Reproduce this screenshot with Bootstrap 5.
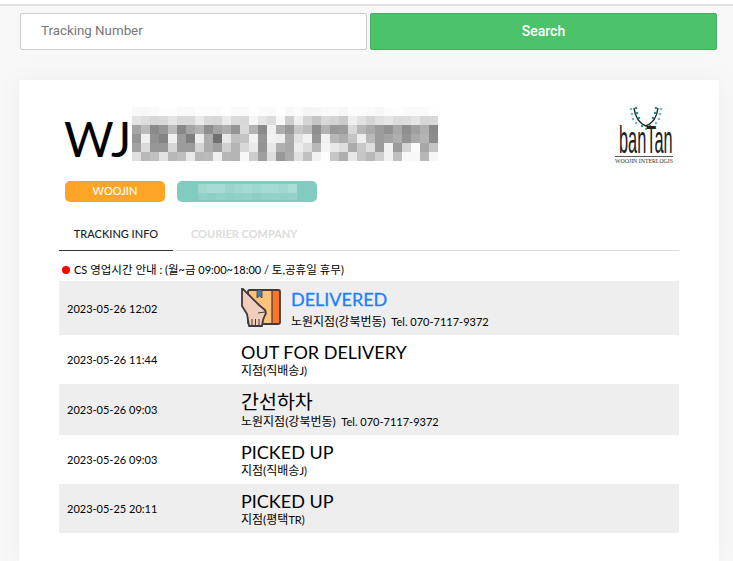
<!DOCTYPE html>
<html lang="ko">
  <head>
    <meta charset="UTF-8" />
    <meta name="viewport" content="width=device-width, initial-scale=1.0" />
    <title>Tracking</title>
    <link
      href="https://cdn.jsdelivr.net/npm/bootstrap@5.3.3/dist/css/bootstrap.min.css"
      rel="stylesheet"
    />
    <style>
      body {
        background: #f8f8f8;
        color: #000;
        font-family: Lato, 'Noto Sans CJK KR', sans-serif;
      }
      .top-line {
        height: 6px;
        background: #fff;
        border-bottom: 2px solid #e2e2e2;
      }
      .search-form {
        gap: 3px;
        margin: 7px 16px 0 20px;
      }
      .search-input,
      .search-btn {
        width: 347px;
        height: 37px;
        border-radius: 2px;
        font-family: Roboto, sans-serif;
      }
      .search-input {
        border: 1px solid #ccc;
        padding: 0 20px 2px;
        font-size: 13.33px;
      }
      .search-input::placeholder {
        color: #777;
        opacity: 1;
      }
      .search-btn {
        background: #4cc26b;
        border: 1px solid #46ac62;
        color: #fff;
        font-size: 14px;
        font-weight: 500;
        padding: 0;
      }
      .sheet {
        margin: 30px 14px 0 19px;
        padding: 0 40px 28px;
        height: 481px;
        box-shadow: 0 0 24px rgba(0, 0, 0, 0.05);
      }
      .waybill-head {
        height: 101px;
        padding: 27px 0 0 5px;
      }
      .waybill-no {
        font-size: 48px;
        line-height: 48px;
        margin-top: 8px;
      }
      .blur-block {
        display: grid;
        grid-template-columns: repeat(34, 9px);
        grid-auto-rows: 9px;
        margin-left: 1px;
        height: 54px;
      }
      .shop-logo {
        margin: -2px 5px 0 auto;
        overflow: visible;
      }
      .tag-row {
        gap: 12px;
        padding-left: 6px;
      }
      .tag-pill {
        height: 21px;
        border-radius: 5px;
        color: #fff;
        font-size: 11px;
        font-weight: 500;
      }
      .tag-orange {
        width: 100px;
        background: #ffa526;
      }
      .tag-teal {
        width: 140px;
        background: #82cbc1;
        padding-top: 3px;
      }
      .tag-blur {
        display: grid;
        grid-template-columns: repeat(11, 9px);
        grid-template-rows: 9px 7px;
      }
      .tab-bar {
        margin-top: 14px;
        height: 35px;
        border-bottom: 1px solid #ddd;
      }
      .tab-bar .nav-link {
        width: 114px;
        height: 35px;
        padding: 10px 0 0;
        margin-right: 18px;
        font-size: 11px;
        font-weight: 500;
        color: #dcdcdc;
        border-bottom: 1px solid transparent;
      }
      .tab-bar .nav-link.active {
        color: #222;
        text-align: center;
        border-bottom-color: #333;
      }
      .tab-bar .nav-link.tab-off {
        width: auto;
        font-weight: 700;
      }
      .cs-note {
        height: 30px;
        padding: 8px 0 0 3px;
        gap: 4px;
        font-size: 11px;
      }
      .cs-note .ko-text {
        font-size: 11.5px;
      }
      .red-dot {
        width: 8px;
        height: 8px;
        border-radius: 50%;
        background: #f00;
      }
      .ko-text {
        font-size: 12px;
      }
      .track-row {
        padding-left: 8px;
      }
      .track-row:nth-child(odd) {
        background: #eee;
      }
      .track-date {
        width: 174px;
        flex: none;
        font-size: 11px;
        padding-top: 2px;
      }
      .track-text {
        padding-top: 1px;
      }
      .track-title {
        font-size: 18px;
        line-height: 20px;
        margin-bottom: 1px;
      }
      .track-place {
        font-size: 11px;
        line-height: 16px;
      }
      .delivered-block {
        padding-top: 3px;
      }
      .delivered-block .track-title {
        margin-bottom: 5px;
      }
      .hangul-block {
        padding-top: 2px;
      }
      .hangul-block .track-title {
        margin-bottom: 2px;
        font-size: 19.5px;
      }
      .delivered-text {
        color: #1e80ff;
        -webkit-text-stroke: 0.3px #1e80ff;
      }
      .box-icon {
        margin-right: 10px;
      }
      .h-54 { height: 54px; }
      .h-49 { height: 49px; }
      .h-51 { height: 51px; }
    </style>
  </head>
  <body>
    <div class="top-line"></div>
    <form class="search-form d-flex">
      <input class="search-input form-control" type="text" placeholder="Tracking Number" />
      <button class="search-btn btn" type="button">Search</button>
    </form>

    <div class="sheet card border-0 rounded-0">
      <div class="waybill-head d-flex">
        <div class="waybill-no">WJ</div>
        <div class="blur-block" id="blur-block"></div>
        <svg class="shop-logo" width="60" height="60" viewBox="0 0 60 60">
          <path d="M20 3c1 9 5 15 12 18 7-3 11-9 12-18" fill="none" stroke="#222" stroke-width="1.4" />
          <g fill="#2f8f96">
            <circle cx="22" cy="3" r="1.3" /><circle cx="23" cy="8" r="1.3" /><circle cx="25" cy="13" r="1.3" />
            <circle cx="42" cy="3" r="1.3" /><circle cx="41" cy="8" r="1.3" /><circle cx="39" cy="13" r="1.3" />
            <circle cx="28" cy="21" r="1.3" /><circle cx="36" cy="21" r="1.3" />
          </g>
          <g fill="#69bcc0">
            <circle cx="17" cy="4" r="1.3" /><circle cx="18" cy="9" r="1.3" /><circle cx="19" cy="14" r="1.3" />
            <circle cx="22" cy="18" r="1.3" /><circle cx="47" cy="4" r="1.3" /><circle cx="46" cy="9" r="1.3" />
            <circle cx="45" cy="14" r="1.3" /><circle cx="42" cy="18" r="1.3" /><circle cx="32" cy="24" r="1.3" />
          </g>
          <text transform="translate(5 48) scale(0.43 1)" font-family="Liberation Sans" font-size="38" fill="#222">banTan</text>
          <rect x="1" y="51" width="58" height="0.8" fill="#333" />
          <text x="1" y="58" textLength="58" lengthAdjust="spacingAndGlyphs" font-family="Liberation Serif" font-size="6" fill="#333">WOOJIN INTERLOGIS</text>
        </svg>
      </div>

      <div class="tag-row d-flex">
        <div class="tag-pill tag-orange d-flex align-items-center justify-content-center">WOOJIN</div>
        <div class="tag-pill tag-teal d-flex justify-content-center"><div class="tag-blur" id="tag-blur"></div></div>
      </div>

      <ul class="tab-bar nav">
        <li class="nav-item"><a class="nav-link active" href="#">TRACKING INFO</a></li>
        <li class="nav-item"><a class="nav-link tab-off" href="#">COURIER COMPANY</a></li>
      </ul>

      <div class="cs-note d-flex align-items-center">
        <span class="red-dot"></span>
        <span>CS <span class="ko-text">영업시간 안내</span> : (<span class="ko-text">월</span>~<span class="ko-text">금</span> 09:00~18:00 / <span class="ko-text">토,공휴일 휴무</span>)</span>
      </div>

      <div>
        <div class="track-row h-54 d-flex align-items-center">
          <div class="track-date">2023-05-26 12:02</div>
          <svg class="box-icon" width="40" height="40" viewBox="0 0 40 40">
            <rect x="7" y="2" width="32" height="34" rx="1.500" fill="#ffc27a" stroke="#3f3a3d" stroke-width="1.800" />
            <rect x="31" y="3" width="7" height="32" fill="#ff7426" />
            <path d="M31 2v34" stroke="#3f3a3d" stroke-width="1.200" />
            <path d="M16 2h5v8l-2.500-2-2.500 2z" fill="#3f7fb5" stroke="#3f3a3d" stroke-width="0.800" />
            <path d="M1 0l17 17 6 5c1 2 1 4 0 5l-2 5-1 6H8L6 26 1 18z" fill="#f0cdbd" stroke="#3f3a3d" stroke-width="1.800" stroke-linejoin="round" />
            <path d="M11 31v7M14.500 31v7M18 31v7M24 24l-7 1" stroke="#3f3a3d" stroke-width="1" fill="none" />
          </svg>
          <div class="delivered-block">
            <div class="track-title delivered-text">DELIVERED</div>
            <div class="track-place"><span class="ko-text">노원지점(강북번동)</span>&nbsp; Tel. 070-7117-9372</div>
          </div>
        </div>
        <div class="track-row h-49 d-flex align-items-center">
          <div class="track-date">2023-05-26 11:44</div>
          <div class="track-text">
            <div class="track-title">OUT FOR DELIVERY</div>
            <div class="track-place"><span class="ko-text">지점(직배송</span>J)</div>
          </div>
        </div>
        <div class="track-row h-51 d-flex align-items-center">
          <div class="track-date">2023-05-26 09:03</div>
          <div class="hangul-block">
            <div class="track-title">간선하차</div>
            <div class="track-place"><span class="ko-text">노원지점(강북번동)</span>&nbsp; Tel. 070-7117-9372</div>
          </div>
        </div>
        <div class="track-row h-49 d-flex align-items-center">
          <div class="track-date">2023-05-26 09:03</div>
          <div class="track-text">
            <div class="track-title">PICKED UP</div>
            <div class="track-place"><span class="ko-text">지점(직배송</span>J)</div>
          </div>
        </div>
        <div class="track-row h-49 d-flex align-items-center">
          <div class="track-date">2023-05-25 20:11</div>
          <div class="track-text">
            <div class="track-title">PICKED UP</div>
            <div class="track-place"><span class="ko-text">지점(평택</span>TR)</div>
          </div>
        </div>
      </div>
    </div>

    <script src="https://cdn.jsdelivr.net/npm/bootstrap@5.3.3/dist/js/bootstrap.bundle.min.js"></script>
    <script>
      'use strict';

      // mosaic over the waybill number, grey level per cell
      const blurRows = [
        'f9 f8 fa fd fd fa f9 fc fb fb fe fa f9 fe fb fa fe f8 fb f5 f6 f9 fa f6 fc fb fa f7 fc fd fa f9 fa fe',
        'e3 dd d6 d8 e4 d8 d9 ea d9 d7 eb da d8 f6 e6 dc f8 cd ee d4 c5 d8 d4 ca ef e1 d5 e0 e6 dc dd e4 d6 d8',
        'a5 bb 8a 97 bb 88 a5 b3 8e a3 ad 95 d9 b3 8a f0 ad 98 c8 bd 8e b2 98 9c d8 b8 aa 9c 92 a8 8e a0 b0 8a',
        '95 f0 92 84 f0 9d 7f ee ad 70 e8 bf c4 f2 96 f2 ee ab e2 f2 96 f0 b8 ad c4 ee b9 9c a4 ae 94 aa b3 8c',
        'a3 da 96 96 d6 9b 9b d4 ac 9e d0 b4 d8 ea 94 e8 b0 a8 ec dc b8 f5 e8 de ac c8 de 9c f0 9a d4 fa a8 c4',
        'e0 b8 c0 e2 b8 bf e8 b8 bb f0 b6 b4 f8 cd 9f dd 98 ac e0 c0 f2 fe c6 ae e8 c6 b8 cf f2 c0 f8 f8 b8 f6'
      ];
      const blurEl = document.getElementById('blur-block');
      blurRows.forEach(function (row) {
        row.split(' ').forEach(function (v) {
          const cell = document.createElement('span');
          cell.style.background = '#' + v + v + v;
          blurEl.appendChild(cell);
        });
      });

      // same for the teal tag
      const tagCells = [
        'a0d8d0', 'a8dbd4', 'a8dbd4', '9ad4cb', 'a0d8d0', 'a4dad2', '9ed7ce', 'a6dbd3', 'a6dbd3', 'a0d8cf', 'a9dcd5',
        '92d1c8', '8ecfc5', '92d1c8', '8ecfc5', '90d0c6', '92d1c8', '8dcec4', '90d0c6', '92d1c8', '90d0c6', '95d2c9'
      ];
      const tagEl = document.getElementById('tag-blur');
      tagCells.forEach(function (c) {
        const cell = document.createElement('span');
        cell.style.background = '#' + c;
        tagEl.appendChild(cell);
      });
    </script>
  </body>
</html>
